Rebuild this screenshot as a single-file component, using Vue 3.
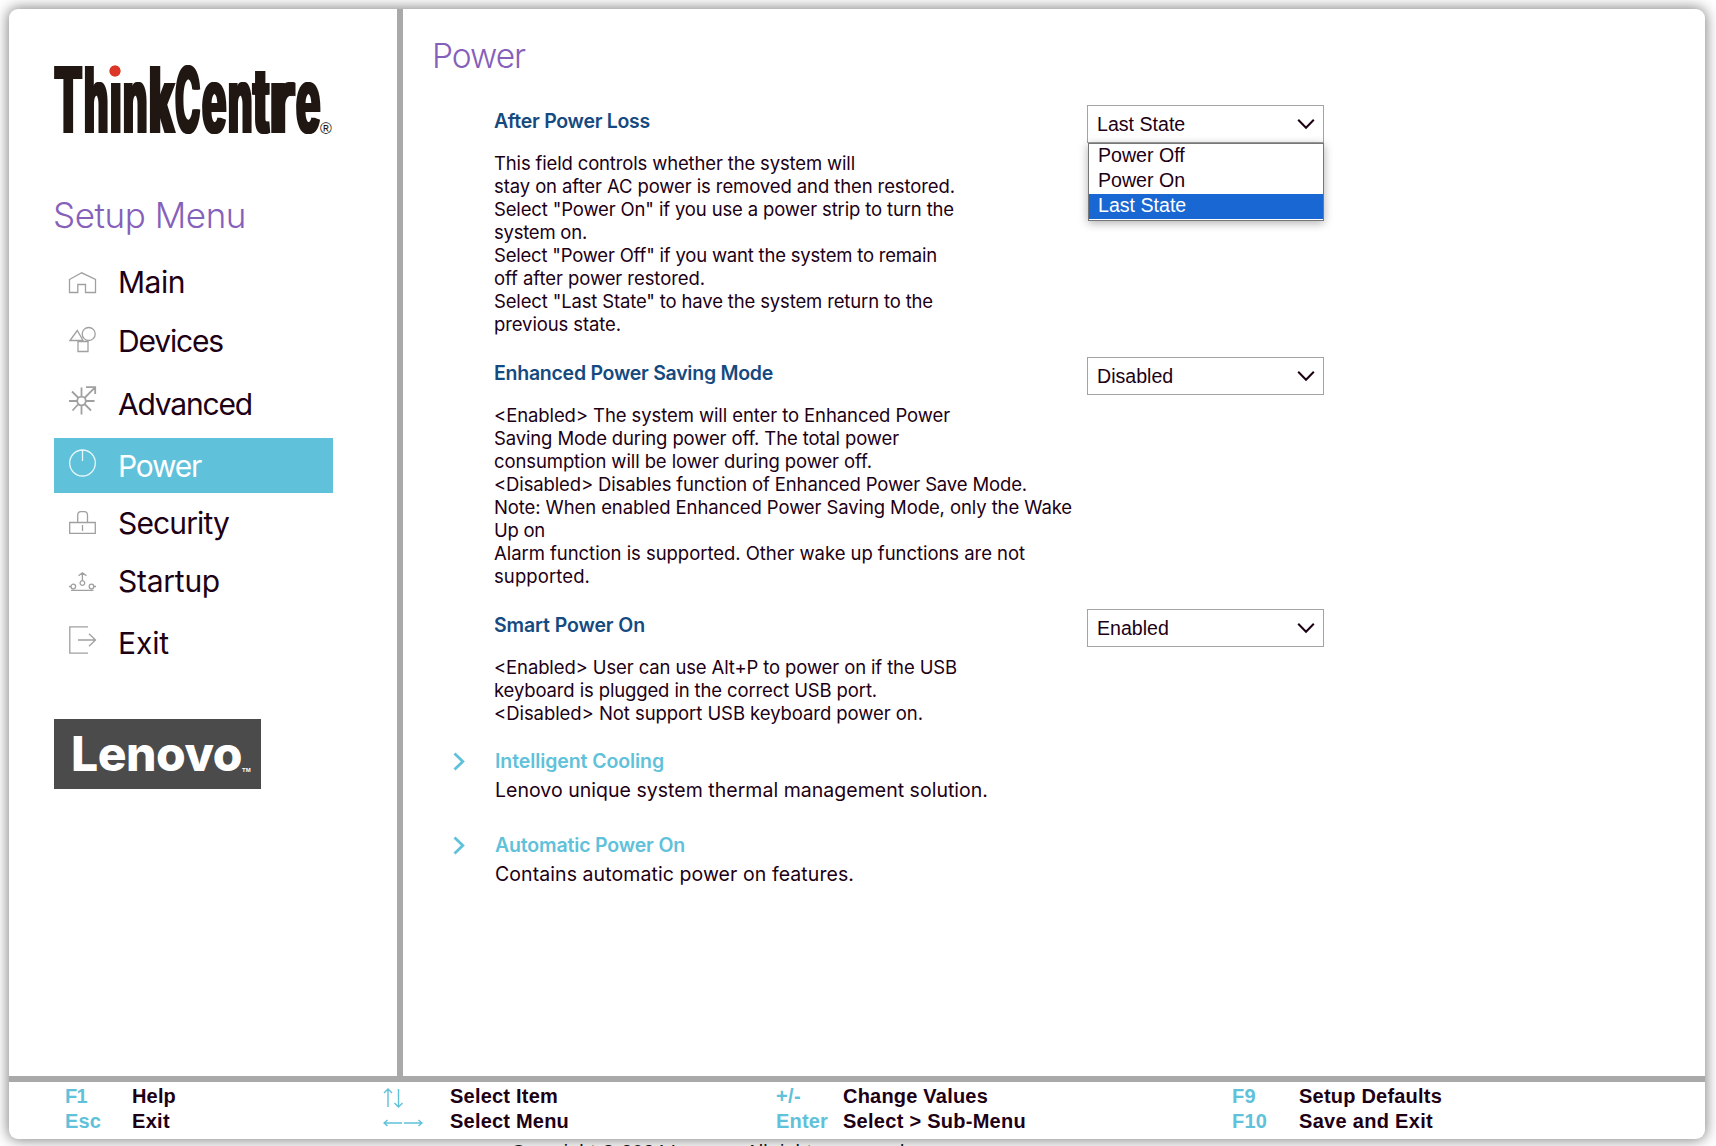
<script setup>
const logo = [
  ['T', 54, 27], ['h', 84, 23], ['i', 110, 10], ['n', 123, 23], ['k', 149, 24], ['C', 175, 24],
  ['e', 202, 23], ['n', 228, 23], ['t', 253, 15], ['r', 270, 23], ['e', 296, 23],
].map(([ch, x, w]) => ({ ch, x: x - 54, w }))

const menu = [
  { label: 'Main', w: 67, h: 21, d: 'M.5 7.5 12.7.8 26.5 7.5V20.5H16.5V12.5H8.8V20.5H.5Z' },
  { label: 'Devices', w: 105, h: 25, d: 'M1 13.5 8.3 3.5 14 13.5ZM13.2 7a6.5 6.5 0 1 0 13 0a6.5 6.5 0 1 0-13 0M9 14.5H19V24.5H9Z' },
  { label: 'Advanced', w: 134, h: 29, heavy: true, d: 'M8.2 15a4.3 4.3 0 1 0 8.6 0a4.3 4.3 0 1 0-8.6 0M12.5 1.5V10.5M12.5 19.5V28.5M0 15H8M17 15H25.5M3 5.5 9.5 12M3.5 24.5 9.5 18M15.5 18 22 24.5M15.5 12 26 1.3M17 1.2H26.2V8' },
  { label: 'Power', w: 83, h: 28, active: true, d: 'M.7 14a12.8 13 0 1 0 25.6 0a12.8 13 0 1 0-25.6 0M13.5 1V12' },
  { label: 'Security', w: 111, h: 23, d: 'M.7 11.5H26.3V22.3H.7ZM8.7 11.5V4.5Q8.7.7 12 .7H15.2Q18.5.7 18.5 4.5V11.5M13.5 14V20' },
  { label: 'Startup', w: 102, h: 20, d: 'M2 18.4H24.5M0 14.5H2M6.6 14.5A2.3 2.3 0 1 0 2 14.5A2.3 2.3 0 1 0 6.6 14.5M24.8 14.5A2.3 2.3 0 1 0 20.2 14.5A2.3 2.3 0 1 0 24.8 14.5M24.8 14.5H27M15.7 11A2.3 2.3 0 1 0 11.1 11A2.3 2.3 0 1 0 15.7 11M13.4 8.5V1M9.5 3.8 13.4.9 17.5 3.8' },
  { label: 'Exit', w: 51, h: 28, d: 'M19 .8H.8V27.2H19M9 14H26.5M20 7.8 26.5 14 20 20.2' },
]

const settings = [
  {
    title: 'After Power Loss', w: 156, value: 'Last State', options: ['Power Off', 'Power On', 'Last State'],
    lines: [
      ['This field controls whether the system will', 361],
      ['stay on after AC power is removed and then restored.', 461],
      ['Select "Power On" if you use a power strip to turn the', 460],
      ['system on.', 93],
      ['Select "Power Off" if you want the system to remain', 443],
      ['off after power restored.', 211],
      ['Select "Last State" to have the system return to the', 439],
      ['previous state.', 127],
    ],
  },
  {
    title: 'Enhanced Power Saving Mode', w: 279, value: 'Disabled',
    lines: [
      ['<Enabled> The system will enter to Enhanced Power', 456],
      ['Saving Mode during power off. The total power', 405],
      ['consumption will be lower during power off.', 378],
      ['<Disabled> Disables function of Enhanced Power Save Mode.', 533],
      ['Note: When enabled Enhanced Power Saving Mode, only the Wake', 578],
      ['Up on', 51],
      ['Alarm function is supported. Other wake up functions are not', 531],
      ['supported.', 96],
    ],
  },
  {
    title: 'Smart Power On', w: 151, value: 'Enabled',
    lines: [
      ['<Enabled> User can use Alt+P to power on if the USB', 463],
      ['keyboard is plugged in the correct USB port.', 383],
      ['<Disabled> Not support USB keyboard power on.', 429],
    ],
  },
]

const links = [
  { title: 'Intelligent Cooling', w: 169, text: 'Lenovo unique system thermal management solution.', tw: 493 },
  { title: 'Automatic Power On', w: 190, text: 'Contains automatic power on features.', tw: 359 },
]

const keys = [
  [['F1', 22, 'Help', 44], ['Esc', 36, 'Exit', 38]],
  [
    [null, 0, 'Select Item', 108, 'M5 1V19M1 5 5 1 9 5M15.5 1V19M11.5 15 15.5 19 19.5 15'],
    [null, 0, 'Select Menu', 119, 'M1 10H19M4.5 7 1 10 4.5 13M21 10H39M35.5 7 39 10 35.5 13'],
  ],
  [['+/-', 25, 'Change Values', 145], ['Enter', 52, 'Select > Sub-Menu', 183]],
  [['F9', 24, 'Setup Defaults', 143], ['F10', 35, 'Save and Exit', 134]],
]

// Tracks the text out (or in) so that it fills the given width.
const vFit = {
  mounted(el, { value }) {
    const natural = el.getBoundingClientRect().width
    el.style.letterSpacing = `${(value - natural) / el.textContent.trim().length}px`
  },
}

// Condenses a wordmark letter to the given width.
const vCondense = {
  mounted(el, { value }) {
    const natural = el.getBoundingClientRect().width
    el.style.transform = `scaleX(${(value + 1.5) / natural})`
  },
}
</script>

<template>
  <div class="screen">
    <div class="panel">
      <div class="body">
        <aside class="side">
          <div class="brand" aria-label="ThinkCentre">
            <span v-for="(l, i) in logo" :key="i" class="slot" :style="{ left: l.x + 'px' }"><span v-condense="l.w" class="letter">{{ l.ch }}</span></span>
            <i class="dot"></i>
            <span class="reg">®</span>
          </div>
          <h2 class="menu-title"><span v-fit="193">Setup Menu</span></h2>
          <nav class="menu">
            <a v-for="m in menu" :key="m.label" class="item" :class="{ active: m.active }">
              <svg class="icon" :class="{ heavy: m.heavy }" width="27" :height="m.h" :viewBox="`0 0 27 ${m.h}`"><path :d="m.d" /></svg>
              <span v-fit="m.w">{{ m.label }}</span>
            </a>
          </nav>
          <div class="lenovo"><span v-fit="171" class="word">Lenovo</span><span class="tm">TM</span></div>
        </aside>

        <main class="main">
          <h1 class="title"><span v-fit="93">Power</span></h1>
          <section v-for="s in settings" :key="s.title" class="setting">
            <div class="info">
              <h3 class="head"><span v-fit="s.w">{{ s.title }}</span></h3>
              <p class="desc">
                <span v-for="l in s.lines" :key="l[0]" class="line"><span v-fit="l[1]">{{ l[0] }}</span></span>
              </p>
            </div>
            <div class="field">
              <div class="select">
                <span>{{ s.value }}</span>
                <svg width="18" height="12" viewBox="0 0 18 12"><path d="M1.2 1.8 9 9.8 16.8 1.8" /></svg>
              </div>
              <ul v-if="s.options" class="popup">
                <li v-for="o in s.options" :key="o" :class="{ on: o === s.value }">{{ o }}</li>
              </ul>
            </div>
          </section>
          <section v-for="k in links" :key="k.title" class="link">
            <svg class="chev" width="12" height="19" viewBox="0 0 12 19"><path d="M1.5 1.5 9.8 9.5 1.5 17.5" /></svg>
            <div>
              <h3 class="link-head"><span v-fit="k.w">{{ k.title }}</span></h3>
              <p class="link-text"><span v-fit="k.tw">{{ k.text }}</span></p>
            </div>
          </section>
        </main>
      </div>

      <footer class="footer">
        <div v-for="(col, c) in keys" :key="c" class="col">
          <div v-for="r in col" :key="r[2]" class="row">
            <span class="key">
              <svg v-if="r[4]" class="arrows" width="40" height="20" viewBox="0 0 40 20"><path :d="r[4]" /></svg>
              <span v-else v-fit="r[1]">{{ r[0] }}</span>
            </span>
            <span v-fit="r[3]" class="action">{{ r[2] }}</span>
          </div>
        </div>
      </footer>
    </div>
    <div class="copy"><span v-fit="399">Copyright © 2024 Lenovo. All rights reserved.</span></div>
  </div>
</template>

<style>
html, body { margin: 0; overflow: hidden; background: #fff; }
</style>

<style scoped>
* { box-sizing: border-box; }
h1, h2, h3, p, ul { margin: 0; padding: 0; font-weight: 400; }
span { white-space: nowrap; }
.screen { width: 1716px; height: 1146px; padding: 9px 11px 0 9px; overflow: hidden; background: #fff; color: #1d0014; font-family: Inter, "Liberation Sans", sans-serif; }
.panel { position: relative; height: 1130px; display: flex; flex-direction: column; background: #fff; border-radius: 9px; box-shadow: 0 0 14px 1px rgba(0, 0, 0, .5); }
.body { display: flex; height: 1067px; }
.side { width: 394px; padding-left: 45px; border-right: 6px solid #a9a9a9; }

.brand { position: relative; height: 80px; margin-top: 50px; color: #201713; }
.slot { position: absolute; top: 1px; }
.letter { display: inline-block; transform-origin: 0 0; font-size: 92px; line-height: 80px; font-weight: 800; text-shadow: 3px 0 currentColor, -3px 0 currentColor; }
.dot { position: absolute; left: 54px; top: 0; width: 14px; height: 19px; background: radial-gradient(circle 7px at 7px 12px, #dc3726 5.2px, #fff 6px); }
.reg { position: absolute; left: 266px; top: 60px; font: 16px/20px "Liberation Sans", sans-serif; }

.menu-title { height: 50px; margin: 51px 0 0 -1px; font-size: 35px; line-height: 50px; font-weight: 350; color: #8560ba; }
.menu { margin-top: 15px; }
.item { display: flex; align-items: baseline; width: 279px; height: 55px; padding-left: 15px; font-size: 30px; line-height: 57px; font-weight: 400; }
.item:nth-child(1) { line-height: 55px; }
.item:nth-child(2), .item:nth-child(6) { margin-top: 3px; }
.item:nth-child(3) { margin-top: 8px; }
.item:nth-child(4), .item:nth-child(7) { margin-top: 7px; }
.item:nth-child(5) { margin-top: 2px; }
.icon { flex: none; width: 27px; margin-right: 22px; fill: none; stroke: #a0a0a0; stroke-width: 1.3; overflow: visible; }
.icon.heavy { stroke-width: 1.8; }
.active { background: #5fc1da; color: #fff; line-height: 56px; }
.active .icon { stroke: #e6f7fb; }
.lenovo { position: relative; width: 207px; height: 70px; margin-top: 49px; padding-left: 17px; background: #4b4b4b; color: #fff; }
.word { display: inline-block; font-size: 48px; line-height: 69px; font-weight: 800; }
.tm { position: absolute; left: 188px; top: 46px; font: bold 6px/10px "Liberation Sans", sans-serif; }

.main { flex: 1; padding: 22px 0 0 29px; }
.title { height: 50px; font-size: 33.5px; line-height: 50px; font-weight: 350; color: #8560ba; }
.setting { display: flex; height: 252px; padding-left: 62px; }
.title + .setting { margin-top: 24px; }
.setting:nth-of-type(3) { height: 126px; }
.info { width: 593px; padding-top: 1px; }
.head { height: 30px; font-size: 19.5px; line-height: 30px; font-weight: 600; color: #154a80; }
.desc { padding-top: 16px; }
.line { display: block; height: 23px; font-size: 18.5px; line-height: 23px; }
.field { position: relative; width: 237px; font-family: "Liberation Sans", Arial, sans-serif; font-size: 19.6px; }
.select { display: flex; align-items: center; justify-content: space-between; height: 38px; padding: 0 8px 0 9px; border: 1px solid #a3a3a3; }
.select svg { fill: none; stroke: #1d0014; stroke-width: 2; }
.popup { position: absolute; left: 1px; top: 38px; width: 236px; height: 78px; list-style: none; background: #fff; border: 1px solid #777; box-shadow: 0 2px 9px rgba(0, 0, 0, .32); }
.popup li { height: 25px; padding-left: 9px; line-height: 22px; }
.popup .on { background: #1967d2; color: #fff; }

.link { display: flex; height: 84px; padding-left: 21px; }
.setting + .link { margin-top: 17px; }
.chev { margin: 0 30px 0 0; fill: none; stroke: #5fc1da; stroke-width: 2.8; }
.link-head { height: 30px; margin-top: -6px; font-size: 19.5px; line-height: 30px; font-weight: 600; color: #5fc1da; }
.link-text { font-size: 19.5px; line-height: 28px; }

.footer { display: flex; height: 63px; padding: 2px 0 0 56px; border-top: 6px solid #a9a9a9; font-family: "Liberation Sans", Arial, sans-serif; font-size: 20px; font-weight: 700; line-height: 25px; }
.col { flex: none; width: 318px; }
.col:nth-child(2) { width: 393px; }
.col:nth-child(3) { width: 456px; }
.row { display: flex; height: 25px; }
.key { flex: none; width: 67px; color: #5fc1da; }
.arrows { display: block; margin-top: 4px; fill: none; stroke: currentColor; stroke-width: 1.4; }
.copy { position: relative; height: 20px; margin-top: 2px; padding-left: 502px; font: 19.5px/23px "Liberation Sans", Arial, sans-serif; color: #111; }
</style>
